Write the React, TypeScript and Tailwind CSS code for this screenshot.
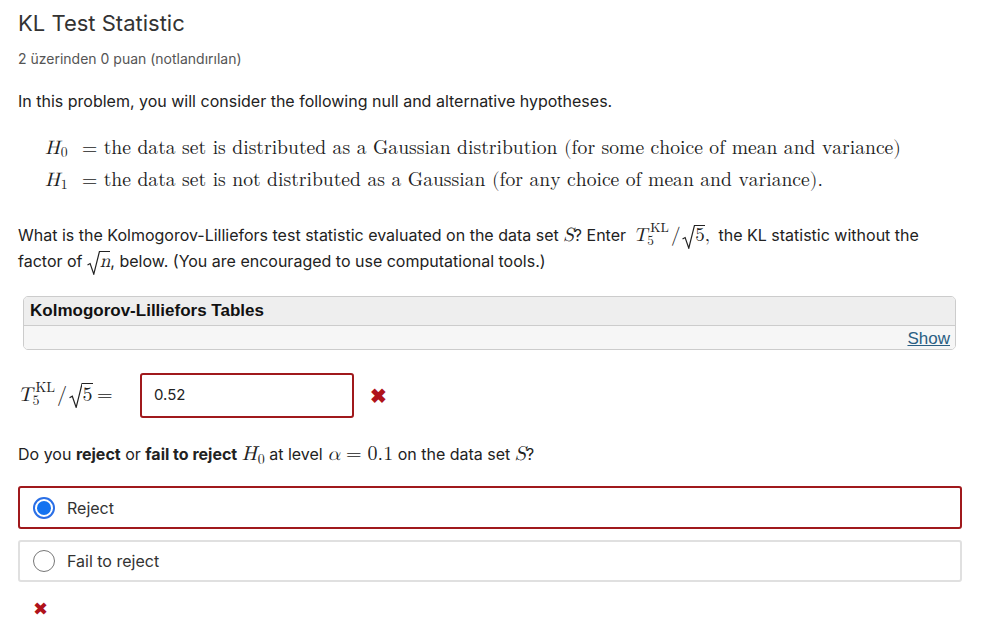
import React from "react";

const serif = "font-['Latin_Modern_Math','Liberation_Serif',serif]";
const mi = `${serif} leading-none`;

function Sqrt({ children }: { children: React.ReactNode }) {
  return (
    <span className="relative inline-block pl-[0.62em] -mt-[0.2em] leading-none">
      <svg
        className="absolute left-0 top-0 h-[calc(100%+0.12em)] w-[0.66em]"
        viewBox="0 0 12 24"
        preserveAspectRatio="none"
      >
        <path
          d="M0.5 14 L3 12.5 L6.5 23 L11.9 0.6 L12 0.6"
          fill="none"
          stroke="#222"
          strokeWidth="1.2"
          vectorEffect="non-scaling-stroke"
        />
      </svg>
      <span className="inline-block border-t-[1.2px] border-[#222] leading-[1.1] pl-[1px]">{children}</span>
    </span>
  );
}

function TKL({ size = "text-[19px]" }: { size?: string }) {
  return (
    <span className={`${mi} ${size} text-[#222] whitespace-nowrap`}>
      <span className="italic">T</span>
      <span className="inline-block align-[-0.28em] leading-none text-[0.7em] ml-[3px] -mt-[0.5em]">
        <span className="block leading-none">KL</span>
        <span className="block leading-none -mt-[0.05em] -ml-[3px]">5</span>
      </span>
      <span className="mx-[2px]">/</span>
      <Sqrt>5</Sqrt>
    </span>
  );
}

function H({ n }: { n: string }) {
  return (
    <span className="italic">
      H<sub className="not-italic text-[0.7em] ml-[1px]">{n}</sub>
    </span>
  );
}

export default function App() {
  return (
    <div className="w-[993px] h-[624px] bg-white text-[#333] font-['Inter',sans-serif] overflow-hidden">
      <div className="pl-[18px] pr-[32px] pt-[9px]">
        <h2 className="text-[22px] leading-[28px] text-[#333] font-normal">KL Test Statistic</h2>
        <div className="mt-[13px] text-[14px] leading-[18px] text-[#555]">2 üzerinden 0 puan (notlandırılan)</div>
        <p className="mt-[21px] text-[16px] leading-[24px] text-[#222]">
          In this problem, you will consider the following null and alternative hypotheses.
        </p>

        <div className={`mt-[19px] ml-[27px] ${serif} text-[19.6px] text-[#222] leading-[32px]`}>
          <div className="flex">
            <span className="w-[37px]"><H n="0" /></span>
            <span>= the data set is distributed as a Gaussian distribution (for some choice of mean and variance)</span>
          </div>
          <div className="flex">
            <span className="w-[37px]"><H n="1" /></span>
            <span>= the data set is not distributed as a Gaussian (for any choice of mean and variance).</span>
          </div>
        </div>

        <p className="mt-[26px] w-[925px] text-[16px] leading-[26px] text-[#222]">
          What is the Kolmogorov-Lilliefors test statistic evaluated on the data set{" "}
          <span className={`${mi} italic text-[19px]`}>S</span>? Enter{" "}
          <span className="ml-[3px]"><TKL /></span>
          <span className={`${mi} text-[19px] mr-[4px]`}>,</span> the KL statistic without the factor of{" "}
          <span className={`${mi} text-[19px]`}>
            <Sqrt>
              <span className="italic">n</span>
            </Sqrt>
          </span>
          , below. (You are encouraged to use computational tools.)
        </p>

        <div className="mt-[22px] ml-[5px] w-[933px] border border-[#ccc] rounded-[5px] overflow-hidden">
          <div className="bg-[#eeeeee] border-b border-[#ccc] h-[29px] px-[6px] flex items-center font-['Liberation_Sans',sans-serif] font-bold text-[17px] text-[#111]">
            Kolmogorov-Lilliefors Tables
          </div>
          <div className="bg-[#f6f6f6] h-[23px] flex justify-end items-end px-[5px]">
            <span className="font-['Liberation_Sans',sans-serif] text-[17px] text-[#2a5e83] underline leading-[20px]">Show</span>
          </div>
        </div>

        <div className="mt-[23px] flex items-center">
          <span className="w-[122px]">
            <TKL size="text-[20px]" /> <span className={`${mi} text-[20px] text-[#222]`}>=</span>
          </span>
          <div className="w-[214px] h-[45px] border-2 border-[#a0191c] rounded-[3px] flex items-center px-[12px] text-[15px] text-[#222]">
            0.52
          </div>
          <span className="ml-[16px] text-[#b0131a] text-[20px] font-bold leading-none">✖</span>
        </div>

        <p className="mt-[24px] text-[16px] leading-[24px] text-[#222]">
          Do you <b>reject</b> or <b>fail to reject</b>{" "}
          <span className={`${mi} text-[20px]`}>
            <H n="0" />
          </span>{" "}
          at level <span className={`${mi} italic text-[20px]`}>α</span>
          <span className={`${mi} text-[20px] mx-[6px]`}>=</span>
          <span className={`${mi} text-[20px]`}>0.1</span> on the data set{" "}
          <span className={`${mi} italic text-[20px]`}>S</span>?
        </p>

        <div className="mt-[20px] flex flex-col gap-[11px] w-[944px]">
          <div className="h-[43px] border-2 border-[#a0191c] rounded-[3px] flex items-center px-[13px]">
            <span className="w-[22px] h-[22px] rounded-full border-2 border-[#2a6fe6] flex items-center justify-center">
              <span className="w-[14px] h-[14px] rounded-full bg-[#1473f0]" />
            </span>
            <span className="ml-[12px] text-[16px] text-[#333]">Reject</span>
          </div>
          <div className="h-[42px] border-2 border-[#e0e0e0] rounded-[3px] flex items-center px-[13px]">
            <span className="w-[22px] h-[22px] rounded-full border border-[#777]" />
            <span className="ml-[12px] text-[16px] text-[#333]">Fail to reject</span>
          </div>
        </div>
        <div className="mt-[18px] ml-[15px] text-[#b0131a] text-[18px] leading-none">✖</div>
      </div>
    </div>
  );
}
